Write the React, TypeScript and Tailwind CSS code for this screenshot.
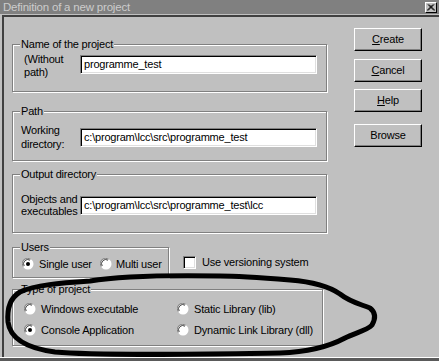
import React from 'react';

const font = { fontFamily: '"Liberation Sans", Arial, sans-serif' };

function Group({
  label,
  className,
  children,
}: {
  label: string;
  className: string;
  children?: React.ReactNode;
}) {
  return (
    <div
      className={`relative border border-[#808080] shadow-[inset_1px_1px_0_#fff,1px_1px_0_#fff] ${className}`}
    >
      <span className="absolute left-[7px] top-[-8px] bg-[#c0c0c0] px-[1px] leading-[14px]">
        {label}
      </span>
      {children}
    </div>
  );
}

function Field({ value }: { value: string }) {
  return (
    <div className="h-[19px] w-[237px] shrink-0 border border-t-[#808080] border-l-[#808080] border-r-white border-b-white bg-white pl-[3px] leading-[17px] shadow-[inset_1px_1px_0_#000,inset_-1px_-1px_0_#dfdfdf] whitespace-nowrap overflow-hidden">
      {value}
    </div>
  );
}

function Radio({ checked }: { checked?: boolean }) {
  return (
    <svg width="12" height="12" viewBox="0 0 12 12" className="shrink-0">
      <circle cx="6" cy="6" r="5.5" fill="#fff" />
      <path d="M1.2 8.6A5.3 5.3 0 0 1 8.6 1.2" fill="none" stroke="#808080" strokeWidth="1" />
      <path d="M2.2 8A4.2 4.2 0 0 1 8 2.2" fill="none" stroke="#404040" strokeWidth="1" />
      {checked && <circle cx="6" cy="6" r="2" fill="#000" />}
    </svg>
  );
}

function Button({ children }: { children: React.ReactNode }) {
  return (
    <div className="flex h-[23px] w-[68px] items-center justify-center border border-t-white border-l-white border-r-black border-b-black bg-[#c0c0c0] shadow-[inset_-1px_-1px_0_#808080]">
      {children}
    </div>
  );
}

export default function App() {
  return (
    <div
      className="relative flex h-[361px] w-[439px] flex-col overflow-hidden bg-[#c0c0c0] text-[11px] tracking-[-0.2px] text-black"
      style={font}
    >
      {/* Title bar */}
      <div className="flex h-[14px] shrink-0 items-center justify-between bg-[#808080] pl-[3px] pr-[2px]">
        <span className="leading-[14px] text-[#cccccc] text-[11.5px]">Definition of a new project</span>
        <div className="flex h-[11px] w-[12px] items-center justify-center border border-t-white border-l-white border-r-black border-b-black bg-[#c0c0c0]">
          <svg width="8" height="7" viewBox="0 0 8 7">
            <path d="M1 0.5L7 6.5M7 0.5L1 6.5M2 0.5L8 6.5M6 0.5L0 6.5" stroke="#000" strokeWidth="1" />
          </svg>
        </div>
      </div>

      {/* Body */}
      <div className="ml-[2px] mt-[1px] flex min-h-0 flex-1 border-l-2 border-t-2 border-[#404040]">
        <div className="ml-[8px] flex w-[316px] flex-col">
          <Group label="Name of the project" className="mt-[27px] h-[48px] w-[315px]">
            <div className="flex items-start pl-[11px] pt-[10px]">
              <div className="mt-[-2px] w-[56px] leading-[13px]">
                (Without
                <br />
                path)
              </div>
              <Field value="programme_test" />
            </div>
          </Group>

          <Group label="Path" className="mt-[19px] h-[50px] w-[315px]">
            <div className="flex items-center pl-[8px] pt-[11px]">
              <div className="w-[59px] leading-[14px]">
                Working
                <br />
                directory:
              </div>
              <Field value="c:\program\lcc\src\programme_test" />
            </div>
          </Group>

          <Group label="Output directory" className="mt-[13px] h-[59px] w-[315px]">
            <div className="flex items-center pl-[8px] pt-[18px]">
              <div className="w-[59px] leading-[12px]">
                Objects and
                <br />
                executables
              </div>
              <Field value="c:\program\lcc\src\programme_test\lcc" />
            </div>
          </Group>

          <div className="mt-[14px] flex items-start">
            <Group label="Users" className="h-[31px] w-[157px] shrink-0">
              <div className="flex h-[12px] items-center pl-[9px] mt-[10px]">
                <div className="flex w-[78px] items-center">
                  <Radio checked />
                  <span className="ml-[5px]">Single user</span>
                </div>
                <Radio />
                <span className="ml-[4px]">Multi user</span>
              </div>
            </Group>
            <div className="ml-[14px] mt-[7px] flex items-center">
              <div className="h-[13px] w-[13px] shrink-0 border border-t-[#808080] border-l-[#808080] border-r-white border-b-white bg-white shadow-[inset_1px_1px_0_#000,inset_-1px_-1px_0_#dfdfdf]" />
              <span className="ml-[6px]">Use versioning system</span>
            </div>
          </div>

          <Group label="Type of project" className="mt-[11px] h-[57px] w-[311px]">
            <div className="grid grid-cols-[153px_1fr] gap-y-[9px] pl-[11px] pt-[13px]">
              <div className="flex h-[12px] items-center">
                <Radio />
                <span className="ml-[5px]">Windows executable</span>
              </div>
              <div className="flex h-[12px] items-center">
                <Radio />
                <span className="ml-[5px]">Static Library (lib)</span>
              </div>
              <div className="flex h-[12px] items-center">
                <Radio checked />
                <span className="ml-[5px]">Console Application</span>
              </div>
              <div className="flex h-[12px] items-center">
                <Radio />
                <span className="ml-[5px]">Dynamic Link Library (dll)</span>
              </div>
            </div>
          </Group>
        </div>

        <div className="ml-[26px] flex flex-col">
          <div className="mt-[11px]">
            <Button>
              <span className="underline underline-offset-[1px]">C</span>reate
            </Button>
          </div>
          <div className="mt-[8px]">
            <Button>
              <span className="underline underline-offset-[1px]">C</span>ancel
            </Button>
          </div>
          <div className="mt-[7px]">
            <Button>
              <span className="underline underline-offset-[1px]">H</span>elp
            </Button>
          </div>
          <div className="mt-[12px]">
            <Button>Browse</Button>
          </div>
        </div>
      </div>
      <div className="h-[1px] shrink-0 bg-white" />
      <div className="h-[3px] shrink-0 bg-[#5a5a5a]" />

      {/* hand-drawn loop around the project type */}
      <svg
        className="pointer-events-none absolute left-0 top-0"
        width="439"
        height="361"
        viewBox="0 0 439 361"
      >
        <path
          d="M220 276 C160 275 120 276 90 281 C60 283 35 285 20 292 C10 298 7 310 8 322 C10 338 25 348 55 352 C100 356 200 354 280 353 C310 352 330 346 345 338 C355 333 368 330 372 325 C376 318 375 312 370 308 C360 304 350 302 340 294 C330 287 315 282 290 280 C265 278 240 276 220 276 Z"
          fill="none"
          stroke="#000"
          strokeWidth="5"
          strokeLinejoin="round"
        />
      </svg>
    </div>
  );
}
